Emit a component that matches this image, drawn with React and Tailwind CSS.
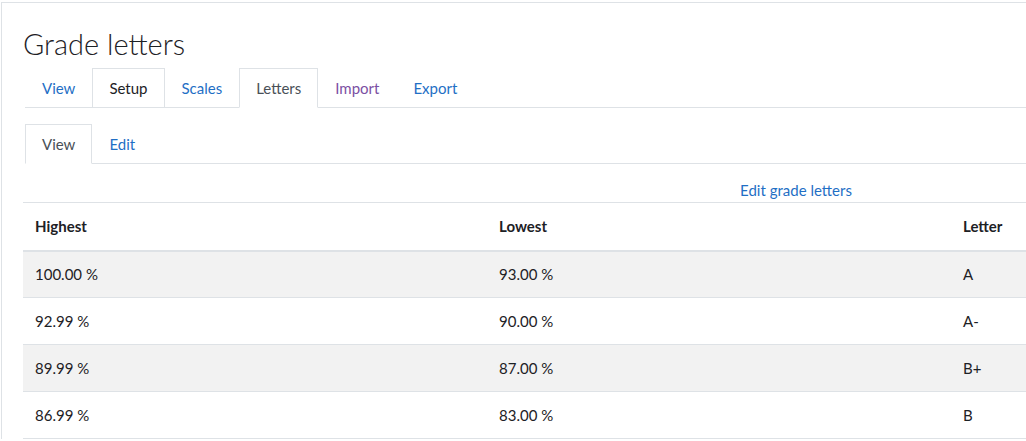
const rows = [
  { high: '100.00 %', low: '93.00 %', letter: 'A' },
  { high: '92.99 %', low: '90.00 %', letter: 'A-' },
  { high: '89.99 %', low: '87.00 %', letter: 'B+' },
  { high: '86.99 %', low: '83.00 %', letter: 'B' },
]

const mainTabs = [
  { label: 'View', cls: 'text-[#1f6fc5] border-transparent' },
  { label: 'Setup', cls: 'text-[#1d2125] border-[#dee2e6]' },
  { label: 'Scales', cls: 'text-[#1f6fc5] border-transparent' },
  { label: 'Letters', cls: 'text-[#495057] border-[#dee2e6] border-b-white bg-white' },
  { label: 'Import', cls: 'text-[#7b4fa3] border-transparent' },
  { label: 'Export', cls: 'text-[#1f6fc5] border-transparent' },
]

export default function App() {
  return (
    <div className="h-[441px] w-[1026px] overflow-hidden bg-white font-['Lato','Liberation_Sans',sans-serif] text-[15px] text-[#1d2125]">
      <div className="mt-[2px] ml-px w-[1580px] border-t border-l border-[#dee2e6] pl-[21px] pt-[23px]">
        <h2 className="text-[29px] font-light leading-[36px] text-[#1d2125]">Grade letters</h2>

        {/* Main tabs */}
        <div className="mt-[6px] ml-[2px] flex border-b border-[#dee2e6]">
          {mainTabs.map((t) => (
            <div key={t.label} className={`-mb-px flex h-[40px] items-center border px-[16px] ${t.cls}`}>
              {t.label}
            </div>
          ))}
        </div>

        {/* Sub tabs */}
        <div className="mt-[16px] ml-[2px] flex border-b border-[#dee2e6]">
          <div className="-mb-px flex h-[40px] items-center border border-[#dee2e6] border-b-white px-[16px] text-[#495057]">View</div>
          <div className="-mb-px flex h-[40px] items-center border border-transparent px-[16px] text-[#1f6fc5]">Edit</div>
        </div>

        <div className="w-[1546px] pt-[16px] pb-[2px] text-center leading-[20px] text-[#1f6fc5]">Edit grade letters</div>

        <table className="w-[1546px] table-fixed border-collapse">
          <colgroup>
            <col className="w-[464px]" />
            <col className="w-[464px]" />
            <col />
          </colgroup>
          <thead>
            <tr className="h-[48px] border-t border-b-2 border-[#dee2e6]">
              <th className="px-3 text-left font-bold">Highest</th>
              <th className="px-3 text-left font-bold">Lowest</th>
              <th className="px-3 text-left font-bold">Letter</th>
            </tr>
          </thead>
          <tbody>
            {rows.map((r, i) => (
              <tr key={r.high} className={`h-[47px] border-t border-b border-[#dee2e6] ${i % 2 === 0 ? 'bg-[#f2f2f2]' : 'bg-white'}`}>
                <td className="px-3">{r.high}</td>
                <td className="px-3">{r.low}</td>
                <td className="px-3">{r.letter}</td>
              </tr>
            ))}
          </tbody>
        </table>
      </div>
    </div>
  )
}
